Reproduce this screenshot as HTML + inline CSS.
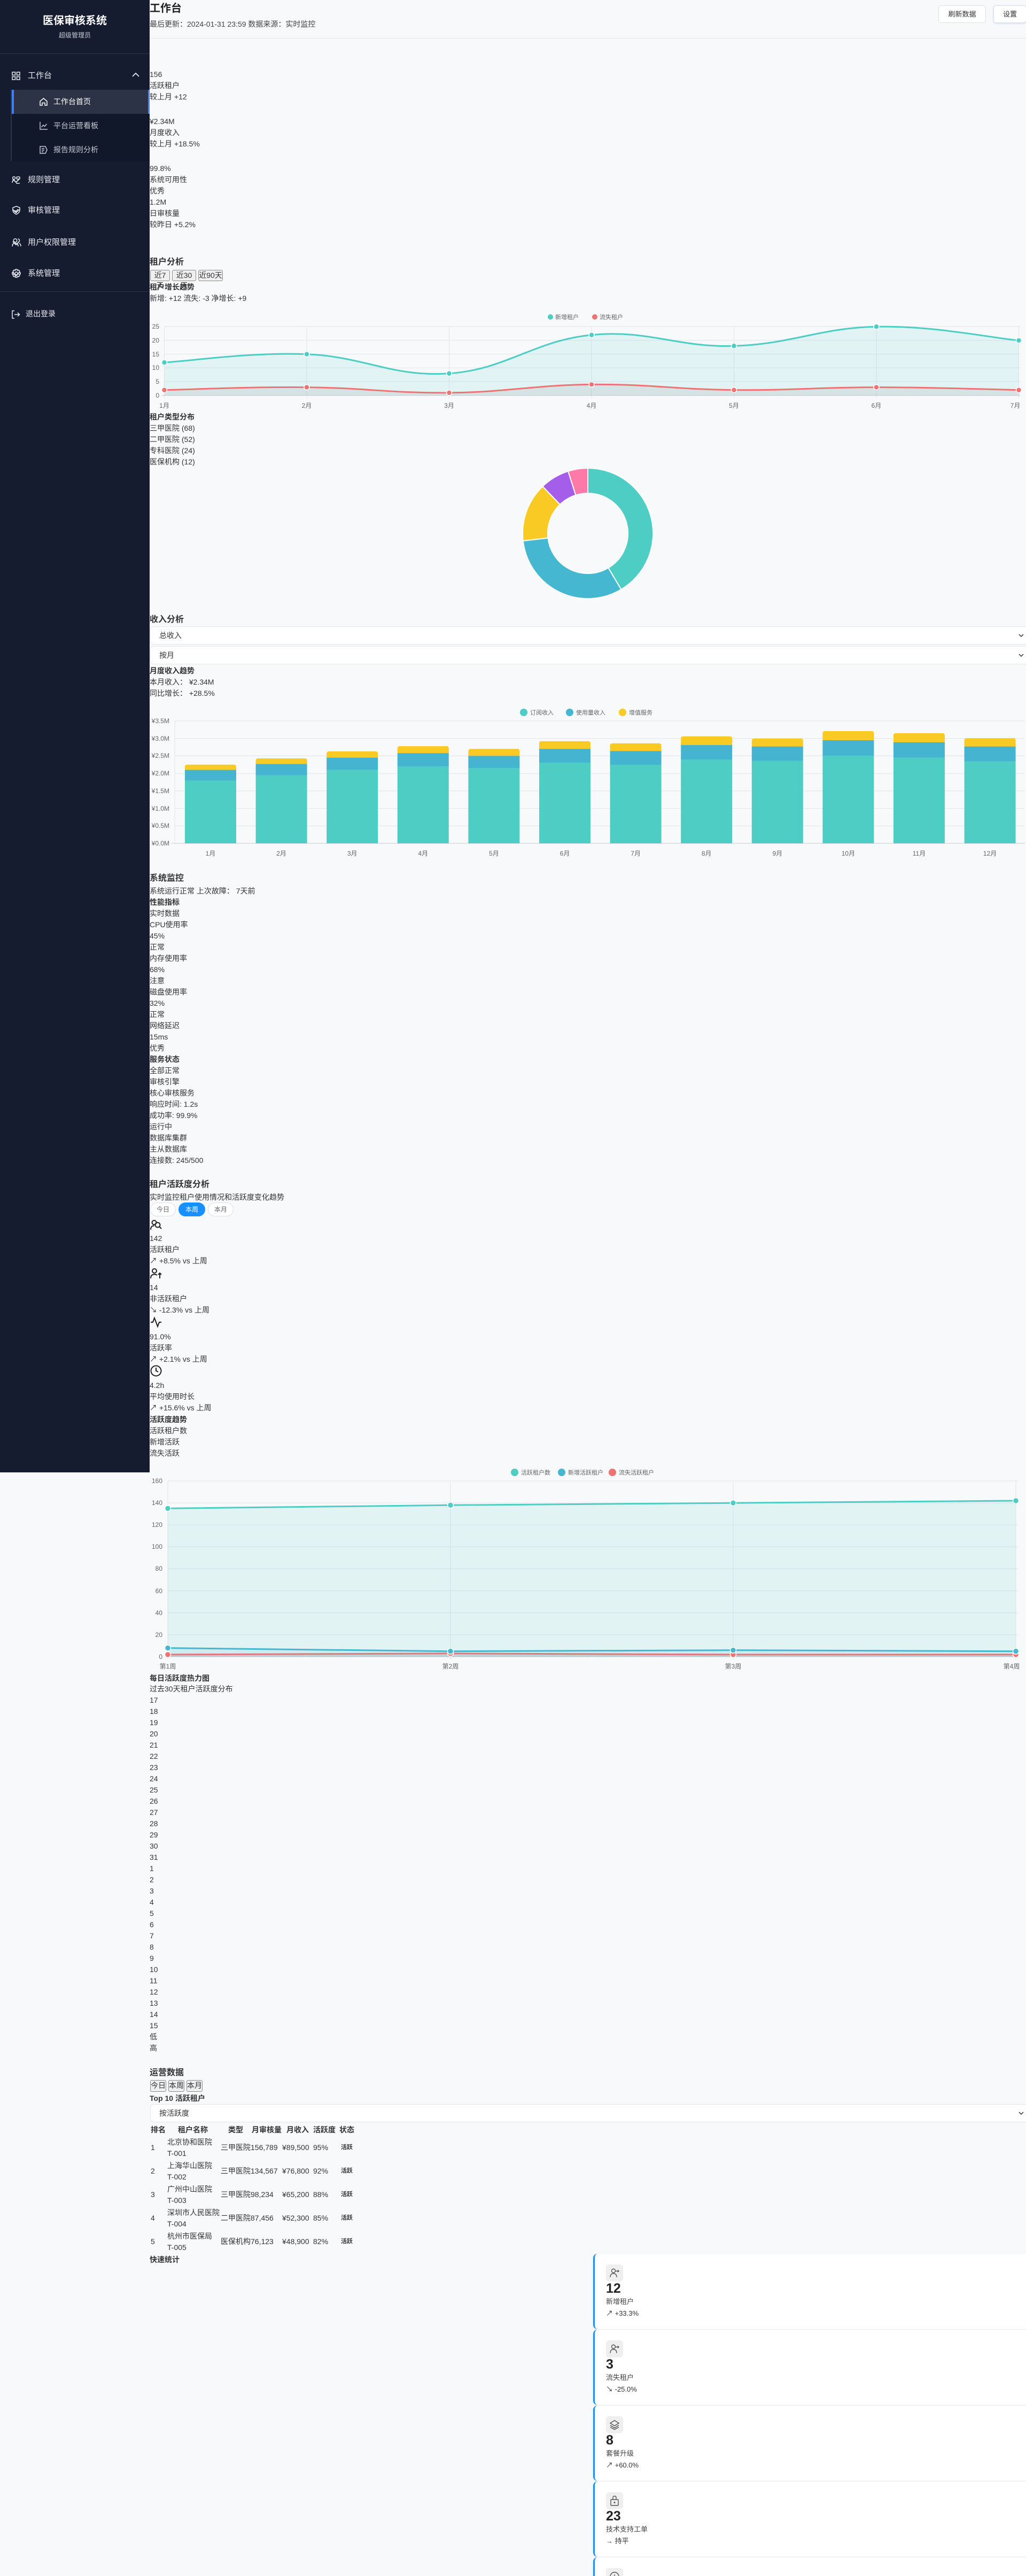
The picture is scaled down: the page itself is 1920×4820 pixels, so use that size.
<!DOCTYPE html>
<html style="height:4820px;overflow:hidden"><head><meta charset="utf-8"><style>
*{box-sizing:border-box}
html{width:1920px;height:4820px;overflow:hidden}
body{margin:0;width:1920px;height:4820px;overflow:hidden;background:#f8f9fb;font-family:"Liberation Sans","Noto Sans CJK SC",sans-serif;color:#333;position:relative}
.a{position:absolute;white-space:nowrap}
.L{line-height:21px;font-size:14px}
.b{font-weight:bold}
.sb{position:absolute;left:0;top:0;width:280px;height:2755px;background:#151c2f;color:#cfd4dc}
.mi{position:absolute;left:0;width:280px;font-size:15px;color:#e8ebf0}
.mi svg{position:absolute;left:22px}
.mi span{position:absolute;left:52px}
.chev{position:absolute;left:246px}
.btn{position:absolute;background:#fff;border:1px solid #dcdfe6;border-radius:5px;font-size:13px;text-align:center;color:#333}
.gb{position:absolute;top:505px;height:21px;background:#efefef;border:1px solid #8a8a8a;border-radius:3px;font-size:14px;line-height:19px;text-align:center}
.sel{position:absolute;left:281px;width:1650px;height:34px;background:#fff;border:1px solid #e3e6ea;border-radius:6px;font-size:14px;line-height:32px;padding-left:16px;color:#333}
.pill{position:absolute;top:2250px;height:26px;border:1px solid #dcdfe6;border-radius:13px;font-size:12px;line-height:24px;text-align:center;color:#666;background:#fff}
.card{position:absolute;left:1110px;width:820px;height:141px;background:#fff;border-left:3px solid #1890ff;border-radius:8px;box-shadow:0 1px 4px rgba(0,0,0,.07);overflow:hidden}
.ib{position:absolute;left:21px;top:20px;width:32px;height:32px;background:#efefef;border-radius:6px}
.ib svg{position:absolute;left:6px;top:6px}
.num{position:absolute;left:21px;top:50px;font-size:25px;font-weight:bold;line-height:30px;color:#222}
.lb{position:absolute;left:21px;top:81px;font-size:13px;line-height:18px;color:#444}
.ch{position:absolute;left:21px;top:103px;font-size:13px;line-height:18px;color:#333}
svg text{font-family:"Liberation Sans","Noto Sans CJK SC",sans-serif}
</style></head><body>

<!-- Sidebar -->
<div class="sb">
  <div class="a b" style="left:0;width:280px;text-align:center;top:26px;font-size:20px;line-height:26px;color:#fff">医保审核系统</div>
  <div class="a" style="left:0;width:280px;text-align:center;top:58px;font-size:12px;line-height:16px;color:#c4c9d2">超级管理员</div>
  <div class="a" style="left:0;top:100px;width:280px;height:1px;background:#2a3347"></div>

  <div class="mi" style="top:130px;height:24px">
    <svg width="16" height="16" viewBox="0 0 16 16" style="top:4px" fill="none" stroke="#e8ebf0" stroke-width="1.5"><rect x="1" y="1" width="5.5" height="5.5"/><rect x="9.5" y="1" width="5.5" height="5.5"/><rect x="1" y="9.5" width="5.5" height="5.5"/><rect x="9.5" y="9.5" width="5.5" height="5.5"/></svg>
    <span style="line-height:24px">工作台</span>
    <svg class="chev" width="16" height="16" viewBox="0 0 16 16" style="left:246px;top:2px" fill="none" stroke="#e8ebf0" stroke-width="1.8"><path d="M2 11 L8 5 L14 11"/></svg>
  </div>
  <div class="a" style="left:20px;top:168px;width:260px;height:134px;background:#111829"></div>
  <div class="a" style="left:20px;top:168px;width:2px;height:134px;background:#2a3347"></div>
  <div class="a" style="left:22px;top:168px;width:258px;height:45px;background:#2c3346"></div>
  <div class="a" style="left:22px;top:168px;width:4px;height:45px;background:#3b82f6"></div>
  <div class="a" style="left:277px;top:168px;width:3px;height:45px;background:#3b82f6"></div>
  <svg class="a" style="left:73px;top:182px" width="17" height="17" viewBox="0 0 17 17" fill="none" stroke="#fff" stroke-width="1.5"><path d="M2 7.5 L8.5 2 L15 7.5 V15 H11 V10.5 H6 V15 H2 Z"/></svg>
  <div class="a" style="left:100px;top:180px;font-size:14px;line-height:21px;color:#fff">工作台首页</div>
  <svg class="a" style="left:73px;top:227px" width="17" height="17" viewBox="0 0 17 17" fill="none" stroke="#c4c9d2" stroke-width="1.5"><path d="M2 1 V15 H16"/><path d="M4.5 11 L8 7 L10.5 9.5 L14.5 5"/></svg>
  <div class="a" style="left:100px;top:225px;font-size:14px;line-height:21px;color:#c4c9d2">平台运营看板</div>
  <svg class="a" style="left:73px;top:272px" width="17" height="17" viewBox="0 0 17 17" fill="none" stroke="#c4c9d2" stroke-width="1.5"><path d="M2 2 H12 L15 8.5 L12 15 H2 Z"/><path d="M5 6 H10 M5 9 H10 M5 12 H8"/></svg>
  <div class="a" style="left:100px;top:270px;font-size:14px;line-height:21px;color:#c4c9d2">报告规则分析</div>

  <div class="mi" style="top:325px;height:24px">
    <svg width="17" height="17" viewBox="0 0 17 17" style="top:4px" fill="none" stroke="#e8ebf0" stroke-width="1.5"><circle cx="4" cy="4" r="2.5"/><path d="M1 13 Q1 8 5 8"/><rect x="9" y="2" width="6" height="4" rx="1"/><path d="M8 14 H15"/></svg>
    <span style="line-height:24px">规则管理</span>
    <svg class="chev" width="16" height="16" viewBox="0 0 16 16" style="top:5px" fill="none" stroke="#e8ebf0" stroke-width="1.8"><path d="M2 5 L8 11 L14 5"/></svg>
  </div>
  <div class="mi" style="top:382px;height:24px">
    <svg width="17" height="17" viewBox="0 0 17 17" style="top:3px" fill="none" stroke="#e8ebf0" stroke-width="1.5"><path d="M8.5 1 L15 3.5 V8 Q15 13 8.5 16 Q2 13 2 8 V3.5 Z"/><path d="M5.5 8.5 L7.8 10.8 L11.5 6.5"/></svg>
    <span style="line-height:24px">审核管理</span>
    <svg class="chev" width="16" height="16" viewBox="0 0 16 16" style="top:5px" fill="none" stroke="#e8ebf0" stroke-width="1.8"><path d="M2 5 L8 11 L14 5"/></svg>
  </div>
  <div class="mi" style="top:442px;height:24px">
    <svg width="18" height="17" viewBox="0 0 18 17" style="top:3px" fill="none" stroke="#e8ebf0" stroke-width="1.5"><circle cx="6.5" cy="5" r="3.2"/><path d="M1 16 Q1 10 6.5 10 Q12 10 12 16"/><path d="M11.5 2 A3 3 0 0 1 11.5 8.2 M14 10.5 Q17 11.5 17 16"/></svg>
    <span style="line-height:24px">用户权限管理</span>
    <svg class="chev" width="16" height="16" viewBox="0 0 16 16" style="top:5px" fill="none" stroke="#e8ebf0" stroke-width="1.8"><path d="M2 5 L8 11 L14 5"/></svg>
  </div>
  <div class="mi" style="top:500px;height:24px">
    <svg width="17" height="17" viewBox="0 0 17 17" style="top:3px" fill="none" stroke="#e8ebf0" stroke-width="1.5"><path d="M7 1 H10 L10.6 3.2 L12.7 2.2 L14.8 4.3 L13.8 6.4 L16 7 V10 L13.8 10.6 L14.8 12.7 L12.7 14.8 L10.6 13.8 L10 16 H7 L6.4 13.8 L4.3 14.8 L2.2 12.7 L3.2 10.6 L1 10 V7 L3.2 6.4 L2.2 4.3 L4.3 2.2 L6.4 3.2 Z"/><circle cx="8.5" cy="8.5" r="2.5"/></svg>
    <span style="line-height:24px">系统管理</span>
    <svg class="chev" width="16" height="16" viewBox="0 0 16 16" style="top:5px" fill="none" stroke="#e8ebf0" stroke-width="1.8"><path d="M2 5 L8 11 L14 5"/></svg>
  </div>
  <div class="a" style="left:0;top:545px;width:280px;height:1px;background:#2a3347"></div>
  <svg class="a" style="left:21px;top:580px" width="17" height="17" viewBox="0 0 17 17" fill="none" stroke="#e8ebf0" stroke-width="1.5"><path d="M6 1.5 H2 V15.5 H6"/><path d="M6 8.5 H15.5 M12 5 L15.5 8.5 L12 12"/></svg>
  <div class="a" style="left:48px;top:577px;font-size:14px;line-height:21px;color:#e8ebf0">退出登录</div>
</div>

<!-- Header -->
<div class="a b" style="left:280px;top:4px;font-size:20px;line-height:24px;color:#222">工作台</div>
<div class="a" style="left:280px;top:35px;font-size:14px;line-height:20px;color:#444">最后更新：2024-01-31 23:59 数据来源：实时监控</div>
<div class="a" style="left:280px;top:71px;width:1640px;height:1px;background:#e5e7eb"></div>
<div class="btn" style="left:1756px;top:10px;width:89px;height:33px;line-height:31px">刷新数据</div>
<div class="btn" style="left:1859px;top:10px;width:62px;height:33px;line-height:31px;box-shadow:0 1px 3px rgba(59,130,246,.25)">设置</div>

<!-- Stats -->
<div class="a L" style="left:280px;top:128.5px">156<br>活跃租户<br>较上月 +12</div>
<div class="a L" style="left:280px;top:216.5px">¥2.34M<br>月度收入<br>较上月 +18.5%</div>
<div class="a L" style="left:280px;top:304.5px">99.8%<br>系统可用性<br>优秀<br>1.2M<br>日审核量<br>较昨日 +5.2%</div>

<!-- Tenant analysis -->
<div class="a b" style="left:280px;top:479px;font-size:16px;line-height:24px">租户分析</div>
<div class="gb" style="left:281px;width:37px">近7天</div>
<div class="gb" style="left:322px;width:45px">近30天</div>
<div class="gb" style="left:371px;width:46px">近90天</div>
<div class="a L b" style="left:280px;top:527px">租户增长趋势</div>
<div class="a L" style="left:280px;top:548px">新增: +12 流失: -3 净增长: +9</div>
<div class="a L" style="left:280px;top:769.5px;font-weight:bold">租户类型分布</div>
<div class="a L" style="left:280px;top:790.5px">三甲医院 (68)<br>二甲医院 (52)<br>专科医院 (24)<br>医保机构 (12)</div>

<!-- Income -->
<div class="a b" style="left:280px;top:1148px;font-size:16px;line-height:24px">收入分析</div>
<div class="sel" style="top:1172px">总收入</div>
<div class="sel" style="top:1209px">按月</div>
<svg class="a" style="left:1905px;top:1184px" width="12" height="10" viewBox="0 0 12 10" fill="none" stroke="#333" stroke-width="1.5"><path d="M2 3 L6 7 L10 3"/></svg>
<svg class="a" style="left:1905px;top:1221px" width="12" height="10" viewBox="0 0 12 10" fill="none" stroke="#333" stroke-width="1.5"><path d="M2 3 L6 7 L10 3"/></svg>
<div class="a L b" style="left:280px;top:1244.5px">月度收入趋势</div>
<div class="a L" style="left:280px;top:1265.5px">本月收入： ¥2.34M<br>同比增长： +28.5%</div>

<!-- System monitor -->
<div class="a b" style="left:280px;top:1632px;font-size:16px;line-height:24px">系统监控</div>
<div class="a L" style="left:280px;top:1656.5px">系统运行正常 上次故障： 7天前<br><b>性能指标</b><br>实时数据<br>CPU使用率<br>45%<br>正常<br>内存使用率<br>68%<br>注意<br>磁盘使用率<br>32%<br>正常<br>网络延迟<br>15ms<br>优秀<br><b>服务状态</b><br>全部正常<br>审核引擎<br>核心审核服务<br>响应时间: 1.2s<br>成功率: 99.9%<br>运行中<br>数据库集群<br>主从数据库<br>连接数: 245/500</div>

<!-- Activity -->
<div class="a b" style="left:280px;top:2205px;font-size:16px;line-height:24px">租户活跃度分析</div>
<div class="a L" style="left:280px;top:2229.5px">实时监控租户使用情况和活跃度变化趋势</div>
<div class="pill" style="left:281px;width:48px">今日</div>
<div class="pill" style="left:334px;width:50px;background:#1890ff;border-color:#1890ff;color:#fff">本周</div>
<div class="pill" style="left:389px;width:48px">本月</div>
<svg class="a" style="left:281px;top:2281px" width="22" height="22" viewBox="0 0 22 22" fill="none" stroke="#222" stroke-width="2"><circle cx="7.5" cy="6.5" r="4"/><path d="M1 20 Q1 12.5 7.5 12.5"/><circle cx="14" cy="11" r="4.5"/><path d="M17.5 14.5 L21 18"/></svg>
<div class="a L" style="left:280px;top:2306.5px">142<br>活跃租户<br>↗ +8.5% vs 上周</div>
<svg class="a" style="left:281px;top:2372px" width="22" height="22" viewBox="0 0 22 22" fill="none" stroke="#222" stroke-width="2"><circle cx="8" cy="6" r="4"/><path d="M1 20 Q1 12.5 8 12.5 Q11 12.5 13 14"/><path d="M18 20 V10 M15 13 L18 10 L21 13"/></svg>
<div class="a L" style="left:280px;top:2398.5px">14<br>非活跃租户<br>↘ -12.3% vs 上周</div>
<svg class="a" style="left:281px;top:2463px" width="22" height="22" viewBox="0 0 22 22" fill="none" stroke="#222" stroke-width="2"><path d="M1 11 H5 L8 3 L14 19 L17 11 H21"/></svg>
<div class="a L" style="left:280px;top:2490.5px">91.0%<br>活跃率<br>↗ +2.1% vs 上周</div>
<svg class="a" style="left:281px;top:2554px" width="22" height="22" viewBox="0 0 22 22" fill="none" stroke="#222" stroke-width="2"><circle cx="11" cy="11" r="9.5"/><path d="M11 5 V11 L15 13"/></svg>
<div class="a L" style="left:280px;top:2582px">4.2h<br>平均使用时长<br>↗ +15.6% vs 上周</div>
<div class="a L" style="left:280px;top:2645.5px"><b>活跃度趋势</b><br>活跃租户数<br>新增活跃<br>流失活跃</div>

<div class="a b" style="left:280px;top:3129.5px;font-size:14px;line-height:21px">每日活跃度热力图</div>
<div class="a L" style="left:280px;top:3150px">过去30天租户活跃度分布</div>
<div class="a L" style="left:280px;top:3170.5px">17<br>18<br>19<br>20<br>21<br>22<br>23<br>24<br>25<br>26<br>27<br>28<br>29<br>30<br>31<br>1<br>2<br>3<br>4<br>5<br>6<br>7<br>8<br>9<br>10<br>11<br>12<br>13<br>14<br>15<br>低<br>高</div>

<!-- Operations -->
<div class="a b" style="left:280px;top:3867px;font-size:16px;line-height:24px">运营数据</div>
<div class="gb" style="left:281px;top:3892px;width:30px;height:22px">今日</div>
<div class="gb" style="left:315px;top:3892px;width:30px;height:22px">本周</div>
<div class="gb" style="left:349px;top:3892px;width:30px;height:22px">本月</div>
<div class="a L b" style="left:280px;top:3915.5px">Top 10 活跃租户</div>
<div class="sel" style="top:3937px;height:34px;padding-left:16px">按活跃度</div>
<svg class="a" style="left:1905px;top:3949px" width="12" height="10" viewBox="0 0 12 10" fill="none" stroke="#333" stroke-width="1.5"><path d="M2 3 L6 7 L10 3"/></svg>
<div class="a L b" style="left:282px;top:3974.5px">排名</div>
<div class="a L b" style="left:333px;top:3974.5px">租户名称</div>
<div class="a L b" style="left:427px;top:3974.5px">类型</div>
<div class="a L b" style="left:471px;top:3974.5px">月审核量</div>
<div class="a L b" style="left:536px;top:3974.5px">月收入</div>
<div class="a L b" style="left:586px;top:3974.5px">活跃度</div>
<div class="a L b" style="left:635px;top:3974.5px">状态</div>

<div class="a L" style="left:282px;top:4007.5px">1</div><div class="a L" style="left:313px;top:3997.5px">北京协和医院<br>T-001</div><div class="a L" style="left:413px;top:4007.5px">三甲医院</div><div class="a L" style="left:469px;top:4007.5px">156,789</div><div class="a L" style="left:528px;top:4007.5px">¥89,500</div><div class="a L" style="left:586px;top:4007.5px">95%</div><div class="a b" style="left:638px;top:4011px;font-size:11px;line-height:14px">活跃</div>
<div class="a L" style="left:282px;top:4051.5px">2</div><div class="a L" style="left:313px;top:4041.5px">上海华山医院<br>T-002</div><div class="a L" style="left:413px;top:4051.5px">三甲医院</div><div class="a L" style="left:469px;top:4051.5px">134,567</div><div class="a L" style="left:528px;top:4051.5px">¥76,800</div><div class="a L" style="left:586px;top:4051.5px">92%</div><div class="a b" style="left:638px;top:4055px;font-size:11px;line-height:14px">活跃</div>
<div class="a L" style="left:282px;top:4095.5px">3</div><div class="a L" style="left:313px;top:4085.5px">广州中山医院<br>T-003</div><div class="a L" style="left:413px;top:4095.5px">三甲医院</div><div class="a L" style="left:469px;top:4095.5px">98,234</div><div class="a L" style="left:528px;top:4095.5px">¥65,200</div><div class="a L" style="left:586px;top:4095.5px">88%</div><div class="a b" style="left:638px;top:4099px;font-size:11px;line-height:14px">活跃</div>
<div class="a L" style="left:282px;top:4139.5px">4</div><div class="a L" style="left:313px;top:4129.5px">深圳市人民医院<br>T-004</div><div class="a L" style="left:413px;top:4139.5px">二甲医院</div><div class="a L" style="left:469px;top:4139.5px">87,456</div><div class="a L" style="left:528px;top:4139.5px">¥52,300</div><div class="a L" style="left:586px;top:4139.5px">85%</div><div class="a b" style="left:638px;top:4143px;font-size:11px;line-height:14px">活跃</div>
<div class="a L" style="left:282px;top:4183.5px">5</div><div class="a L" style="left:313px;top:4173.5px">杭州市医保局<br>T-005</div><div class="a L" style="left:413px;top:4183.5px">医保机构</div><div class="a L" style="left:469px;top:4183.5px">76,123</div><div class="a L" style="left:528px;top:4183.5px">¥48,900</div><div class="a L" style="left:586px;top:4183.5px">82%</div><div class="a b" style="left:638px;top:4187px;font-size:11px;line-height:14px">活跃</div>
<div class="a L b" style="left:280px;top:4217.5px">快速统计</div>

<!-- Quick cards -->
<div class="card" style="top:4217px"><div class="ib"><svg width="20" height="20" viewBox="0 0 20 20" fill="none" stroke="#555" stroke-width="1.4"><circle cx="8" cy="6" r="3.5"/><path d="M2 18 Q2 11 8 11 Q14 11 14 18"/><path d="M12 6.5 H18 M16 4.5 L18 6.5 L16 8.5"/></svg></div><div class="num">12</div><div class="lb">新增租户</div><div class="ch">↗ +33.3%</div></div>
<div class="card" style="top:4359px"><div class="ib"><svg width="20" height="20" viewBox="0 0 20 20" fill="none" stroke="#555" stroke-width="1.4"><circle cx="8" cy="6" r="3.5"/><path d="M2 18 Q2 11 8 11 Q14 11 14 18"/><path d="M12 6.5 H18 M16 4.5 L18 6.5 L16 8.5"/></svg></div><div class="num">3</div><div class="lb">流失租户</div><div class="ch">↘ -25.0%</div></div>
<div class="card" style="top:4501px"><div class="ib"><svg width="20" height="20" viewBox="0 0 20 20" fill="none" stroke="#555" stroke-width="1.4"><path d="M10 2 L18 7 L10 12 L2 7 Z"/><path d="M2 11 L10 16 L18 11"/><path d="M2 14.5 L10 19 L18 14.5"/></svg></div><div class="num">8</div><div class="lb">套餐升级</div><div class="ch">↗ +60.0%</div></div>
<div class="card" style="top:4643px"><div class="ib"><svg width="20" height="20" viewBox="0 0 20 20" fill="none" stroke="#555" stroke-width="1.4"><rect x="3" y="8" width="14" height="11" rx="1"/><path d="M7 8 V4 Q7 1.5 10 1.5 Q13 1.5 13 4 V8"/><circle cx="10" cy="13.5" r=".8" fill="#555"/></svg></div><div class="num">23</div><div class="lb">技术支持工单</div><div class="ch">→ 持平</div></div>
<div class="card" style="top:4785px;height:35px;border-bottom-left-radius:0;border-bottom-right-radius:0"><div class="ib"><svg width="20" height="20" viewBox="0 0 20 20" fill="none" stroke="#555" stroke-width="1.4"><circle cx="10" cy="10" r="8"/><path d="M10 6 V10"/></svg></div></div>

<!-- Charts overlay -->
<svg class="a" style="left:0;top:0" width="1920" height="4820" viewBox="0 0 1920 4820">
<g stroke="#e2e4e8" stroke-width="1">
<path d="M307.5 611 H1910 M307.5 636.7 H1910 M307.5 662.5 H1910 M307.5 688.2 H1910 M307.5 714 H1910"/>
<path d="M307.5 611 V745 M574 611 V745 M840.5 611 V745 M1107 611 V745 M1373.5 611 V745 M1640 611 V745 M1906.5 611 V745"/>
<path d="M302 740 H1910" stroke="#c8cbd0"/>
</g>
<g font-size="12" fill="#666" text-anchor="end">
<text x="298" y="615">25</text><text x="298" y="641">20</text><text x="298" y="667">15</text><text x="298" y="692">10</text><text x="298" y="718">5</text><text x="298" y="744">0</text>
</g>
<g font-size="12" fill="#666" text-anchor="middle">
<text x="307.5" y="763">1月</text><text x="574" y="763">2月</text><text x="840.5" y="763">3月</text><text x="1107" y="763">4月</text><text x="1373.5" y="763">5月</text><text x="1640" y="763">6月</text><text x="1900" y="763">7月</text>
</g>
<path d="M307.5,678.2 C360.8,675.1 467.4,658.7 574,662.8 C680.6,666.9 733.9,706 840.5,698.8 C947.1,691.6 1000.4,637 1107,626.7 C1213.6,616.4 1266.9,650.4 1373.5,647.3 C1480.1,644.2 1533.4,613.4 1640,611.3 C1746.6,609.2 1853.2,631.9 1906.5,637 L1906.5,740 L307.5,740 Z" fill="rgba(78,205,196,0.12)"/>
<path d="M307.5,729.7 C360.8,728.7 467.4,723.6 574,724.6 C680.6,725.6 733.9,735.9 840.5,734.9 C947.1,733.9 1000.4,720.4 1107,719.4 C1213.6,718.4 1266.9,728.7 1373.5,729.7 C1480.1,730.7 1533.4,724.6 1640,724.6 C1746.6,724.6 1853.2,728.7 1906.5,729.7 L1906.5,740 L307.5,740 Z" fill="rgba(180,180,180,0.25)"/>
<path d="M307.5,678.2 C360.8,675.1 467.4,658.7 574,662.8 C680.6,666.9 733.9,706 840.5,698.8 C947.1,691.6 1000.4,637 1107,626.7 C1213.6,616.4 1266.9,650.4 1373.5,647.3 C1480.1,644.2 1533.4,613.4 1640,611.3 C1746.6,609.2 1853.2,631.9 1906.5,637" fill="none" stroke="#4ecdc4" stroke-width="3"/>
<path d="M307.5,729.7 C360.8,728.7 467.4,723.6 574,724.6 C680.6,725.6 733.9,735.9 840.5,734.9 C947.1,733.9 1000.4,720.4 1107,719.4 C1213.6,718.4 1266.9,728.7 1373.5,729.7 C1480.1,730.7 1533.4,724.6 1640,724.6 C1746.6,724.6 1853.2,728.7 1906.5,729.7" fill="none" stroke="#f07373" stroke-width="3"/>
<g fill="#4ecdc4" stroke="#fff" stroke-width="1.5">
<circle cx="307.5" cy="678.2" r="5"/><circle cx="574" cy="662.8" r="5"/><circle cx="840.5" cy="698.8" r="5"/><circle cx="1107" cy="626.7" r="5"/><circle cx="1373.5" cy="647.3" r="5"/><circle cx="1640" cy="611.3" r="5"/><circle cx="1906.5" cy="637" r="5"/>
</g>
<g fill="#f07373" stroke="#fff" stroke-width="1.5">
<circle cx="307.5" cy="729.7" r="5"/><circle cx="574" cy="724.6" r="5"/><circle cx="840.5" cy="734.9" r="5"/><circle cx="1107" cy="719.4" r="5"/><circle cx="1373.5" cy="729.7" r="5"/><circle cx="1640" cy="724.6" r="5"/><circle cx="1906.5" cy="729.7" r="5"/>
</g>
<g font-size="11" fill="#666">
<circle cx="1030" cy="593" r="5" fill="#4ecdc4"/><text x="1039" y="597">新增租户</text>
<circle cx="1113" cy="593" r="5" fill="#f07373"/><text x="1122" y="597">流失租户</text>
</g>

<g stroke="#fff" stroke-width="2">
<path d="M1100,876 A122,122 0 0 1 1162.4,1102.9 L1138.3,1062.5 A75,75 0 0 0 1100,923 Z" fill="#4ecdc4"/>
<path d="M1162.4,1102.9 A122,122 0 0 1 978.8,1012 L1025.5,1006.6 A75,75 0 0 0 1138.3,1062.5 Z" fill="#45b7d1"/>
<path d="M978.8,1012 A122,122 0 0 1 1015.4,910.1 L1048,944 A75,75 0 0 0 1025.5,1006.6 Z" fill="#f9ca24"/>
<path d="M1015.4,910.1 A122,122 0 0 1 1063.2,881.7 L1077.4,926.5 A75,75 0 0 0 1048,944 Z" fill="#a55eea"/>
<path d="M1063.2,881.7 A122,122 0 0 1 1100,876 L1100,923 A75,75 0 0 0 1077.4,926.5 Z" fill="#fd79a8"/>
</g>

<g stroke="#e2e4e8">
<path d="M327 1349 H1918 M327 1381.7 H1918 M327 1414.4 H1918 M327 1447.2 H1918 M327 1479.9 H1918 M327 1512.6 H1918 M327 1545.3 H1918"/>
<path d="M327 1349 V1578"/>
<path d="M321 1578 H1918" stroke="#c8cbd0"/>
</g>
<g font-size="12" fill="#666" text-anchor="end">
<text x="317" y="1353">¥3.5M</text><text x="317" y="1386">¥3.0M</text><text x="317" y="1418">¥2.5M</text><text x="317" y="1451">¥2.0M</text><text x="317" y="1484">¥1.5M</text><text x="317" y="1517">¥1.0M</text><text x="317" y="1549">¥0.5M</text><text x="317" y="1582">¥0.0M</text>
</g>
<g fill="#f9ca24">
<rect x="346" y="1430.8" width="96" height="14" rx="4"/><rect x="478.6" y="1419" width="96" height="14" rx="4"/><rect x="611.2" y="1405.9" width="96" height="16" rx="4"/><rect x="743.8" y="1396.1" width="96" height="17" rx="4"/><rect x="876.4" y="1401.3" width="96" height="17" rx="4"/><rect x="1009" y="1386.9" width="96" height="18" rx="4"/><rect x="1141.6" y="1390.9" width="96" height="18" rx="4"/><rect x="1274.2" y="1377.8" width="96" height="20" rx="4"/><rect x="1406.8" y="1381.7" width="96" height="19" rx="4"/><rect x="1539.4" y="1368" width="96" height="21" rx="4"/><rect x="1672" y="1371.9" width="96" height="21" rx="4"/><rect x="1804.6" y="1381.1" width="96" height="19" rx="4"/>
</g>
<g fill="#45b4d0">
<rect x="346" y="1440.6" width="96" height="20"/><rect x="478.6" y="1429.5" width="96" height="21"/><rect x="611.2" y="1417.7" width="96" height="23"/><rect x="743.8" y="1409.2" width="96" height="25"/><rect x="876.4" y="1414.4" width="96" height="23"/><rect x="1009" y="1401.3" width="96" height="26"/><rect x="1141.6" y="1405.3" width="96" height="26"/><rect x="1274.2" y="1394.1" width="96" height="27"/><rect x="1406.8" y="1396.8" width="96" height="27"/><rect x="1539.4" y="1385" width="96" height="29"/><rect x="1672" y="1388.9" width="96" height="29"/><rect x="1804.6" y="1396.8" width="96" height="28.1"/>
</g>
<g fill="#4ecdc4">
<rect x="346" y="1460.2" width="96" height="117.8"/><rect x="478.6" y="1450.4" width="96" height="127.6"/><rect x="611.2" y="1440.6" width="96" height="137.4"/><rect x="743.8" y="1434.1" width="96" height="143.9"/><rect x="876.4" y="1437.3" width="96" height="140.7"/><rect x="1009" y="1426.9" width="96" height="151.1"/><rect x="1141.6" y="1430.8" width="96" height="147.2"/><rect x="1274.2" y="1421" width="96" height="157"/><rect x="1406.8" y="1423.6" width="96" height="154.4"/><rect x="1539.4" y="1413.8" width="96" height="164.2"/><rect x="1672" y="1417.7" width="96" height="160.3"/><rect x="1804.6" y="1424.9" width="96" height="153.1"/>
</g>
<g font-size="12" fill="#666" text-anchor="middle">
<text x="394" y="1601">1月</text><text x="526.6" y="1601">2月</text><text x="659.2" y="1601">3月</text><text x="791.8" y="1601">4月</text><text x="924.4" y="1601">5月</text><text x="1057" y="1601">6月</text><text x="1189.6" y="1601">7月</text><text x="1322.2" y="1601">8月</text><text x="1454.8" y="1601">9月</text><text x="1587.4" y="1601">10月</text><text x="1720" y="1601">11月</text><text x="1852.6" y="1601">12月</text>
</g>
<g font-size="11" fill="#666">
<circle cx="980" cy="1333" r="7" fill="#4ecdc4"/><text x="992" y="1337">订阅收入</text>
<circle cx="1066" cy="1333" r="7" fill="#45b7d1"/><text x="1078" y="1337">使用量收入</text>
<circle cx="1165" cy="1333" r="7" fill="#f9ca24"/><text x="1177" y="1337">增值服务</text>
</g>

<g stroke="#e2e4e8">
<path d="M314 2771 H1905 M314 2812.1 H1905 M314 2853.3 H1905 M314 2894.4 H1905 M314 2935.5 H1905 M314 2976.6 H1905 M314 3017.8 H1905 M314 3058.9 H1905"/>
<path d="M314 2771 V3105 M843 2771 V3105 M1372 2771 V3105 M1901 2771 V3105"/>
<path d="M308 3100 H1905" stroke="#c8cbd0"/>
</g>
<g font-size="12" fill="#666" text-anchor="end">
<text x="304" y="2775">160</text><text x="304" y="2816">140</text><text x="304" y="2857">120</text><text x="304" y="2898">100</text><text x="304" y="2939">80</text><text x="304" y="2981">60</text><text x="304" y="3022">40</text><text x="304" y="3063">20</text><text x="304" y="3104">0</text>
</g>
<g font-size="12" fill="#666" text-anchor="middle">
<text x="314" y="3122">第1周</text><text x="843" y="3122">第2周</text><text x="1372" y="3122">第3周</text><text x="1893" y="3122">第4周</text>
</g>
<path d="M314 2822.4 L843 2816.3 L1372 2812.2 L1901 2808 L1901 3100 L314 3100 Z" fill="rgba(78,205,196,0.12)"/>
<path d="M314 3083.6 L843 3089.7 L1372 3087.7 L1901 3089.7 L1901 3100 L314 3100 Z" fill="rgba(69,183,209,0.12)"/>
<path d="M314 3095.9 L843 3093.8 L1372 3095.9 L1901 3095.9 L1901 3100 L314 3100 Z" fill="rgba(160,160,160,0.3)"/>
<path d="M314 2822.4 L843 2816.3 L1372 2812.2 L1901 2808" fill="none" stroke="#4ecdc4" stroke-width="3"/>
<path d="M314 3083.6 L843 3089.7 L1372 3087.7 L1901 3089.7" fill="none" stroke="#45b7d1" stroke-width="3"/>
<path d="M314 3095.9 L843 3093.8 L1372 3095.9 L1901 3095.9" fill="none" stroke="#e07a7a" stroke-width="3"/>
<g stroke="#fff" stroke-width="1.5">
<g fill="#4ecdc4"><circle cx="314" cy="2822.4" r="5.5"/><circle cx="843" cy="2816.3" r="5.5"/><circle cx="1372" cy="2812.2" r="5.5"/><circle cx="1901" cy="2808" r="5.5"/></g>
<g fill="#f07373"><circle cx="314" cy="3095.9" r="5.5"/><circle cx="843" cy="3093.8" r="5.5"/><circle cx="1372" cy="3095.9" r="5.5"/><circle cx="1901" cy="3095.9" r="5.5"/></g>
<g fill="#45b7d1"><circle cx="314" cy="3083.6" r="5.5"/><circle cx="843" cy="3089.7" r="5.5"/><circle cx="1372" cy="3087.7" r="5.5"/><circle cx="1901" cy="3089.7" r="5.5"/></g>
</g>
<g font-size="11" fill="#666">
<circle cx="963" cy="2755" r="7" fill="#4ecdc4"/><text x="975" y="2759">活跃租户数</text>
<circle cx="1051" cy="2755" r="7" fill="#45b7d1"/><text x="1063" y="2759">新增活跃租户</text>
<circle cx="1146" cy="2755" r="7" fill="#f07373"/><text x="1158" y="2759">流失活跃租户</text>
</g>
</svg>
</body></html>
